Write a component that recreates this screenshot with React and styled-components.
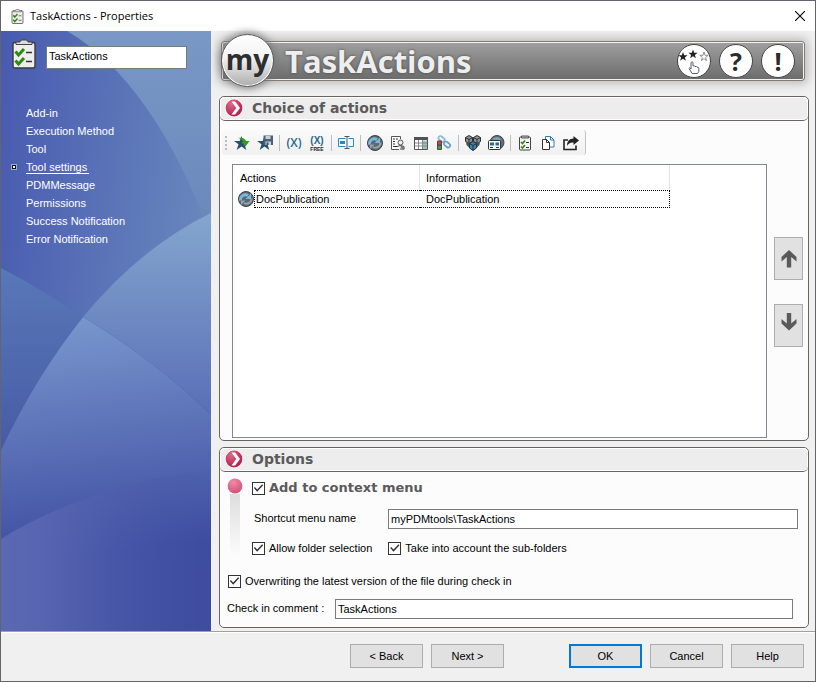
import { useState } from "react";
import styled, { createGlobalStyle } from "styled-components";

const GlobalStyle = createGlobalStyle`
	* {
		box-sizing: border-box;
	}

	body {
		margin: 0;
		font-family: "Liberation Sans", Arial, sans-serif;
		font-size: 11px;
		line-height: 16px;
		color: #000;
	}

	button,
	input {
		font: inherit;
		color: inherit;
	}
`;

const Window = styled.div`
	display: flex;
	flex-direction: column;
	min-height: 100vh;
	border: 1px solid #64646c;
	background-color: #f0f0f0;
`;

const TitleBar = styled.header`
	display: flex;
	align-items: center;
	height: 30px;
	padding: 0 10px 0 9px;
	background-color: #fff;
`;

const Title = styled.h1`
	flex: 1;
	margin: 0 0 0 5px;
	font-family: "Open Sans", "Noto Sans", sans-serif;
	font-size: 11px;
	font-weight: 400;
`;

const CloseButton = styled.button`
	display: flex;
	padding: 0;
	border: none;
	background: none;
`;

const Body = styled.div`
	display: flex;
	flex: 1;
`;

const Sidebar = styled.aside`
	position: relative;
	flex: none;
	width: 210px;
	padding: 8px 24px 0 11px;
	color: #fff;
`;

const Backdrop = styled.svg`
	position: absolute;
	inset: 0;
	width: 100%;
	height: 100%;
`;

const TaskName = styled.div`
	position: relative;
	display: flex;
	align-items: flex-end;
	gap: 10px;
`;

const NameInput = styled.input`
	flex: 1;
	min-width: 0;
	height: 23px;
	padding: 0 2px 4px;
	border: 1px solid #7a7a7a;
	background-color: #fff;
	color: #000;
`;

const Nav = styled.nav`
	position: relative;
	display: flex;
	flex-direction: column;
	margin-top: 35px;
`;

const NavItem = styled.div`
	display: flex;
	align-items: center;
	height: 18px;
`;

const Bullet = styled.span`
	width: 4px;
	height: 4px;
	margin-right: 10px;
	border: 1px solid ${({ $active }) => ($active ? "#111" : "transparent")};
	background-color: ${({ $active }) => ($active ? "#fff" : "transparent")};
	outline: 1px solid ${({ $active }) => ($active ? "#a0acd6" : "transparent")};
`;

const NavLink = styled.a`
	padding-right: ${({ $active }) => ($active ? "2px" : "0")};
	line-height: 12px;
	color: #fff;
	text-decoration: none;
	border-bottom: 1px solid ${({ $active }) => ($active ? "#fff" : "transparent")};
`;

const Main = styled.main`
	display: flex;
	flex: 1;
	flex-direction: column;
	min-width: 0;
	padding: 3px 6px 3px 8px;
`;

const Banner = styled.div`
	display: flex;
	align-items: center;
	height: 54px;
	margin-bottom: 8px;
	padding: 0 4px 0 2px;
`;

const BannerBar = styled.div`
	display: flex;
	flex: 1;
	align-items: center;
	height: 40px;
	padding-right: 9px;
	border: 1px solid #857c70;
	border-radius: 3px;
	background: linear-gradient(#a0a0a0, #6b6b6b);
	box-shadow: inset 0 0 0 1px #f4f2ee, 0 0 10px 3px #bdbdbd;
`;

const Brand = styled.span`
	display: flex;
	align-items: center;
	justify-content: center;
	width: 53px;
	height: 53px;
	margin: 0 0 2px -1px;
	padding-bottom: 2px;
	border: 1px solid #555;
	border-radius: 50%;
	background: linear-gradient(#fff, #f2f2f2 45%, #adadad);
	box-shadow: inset 0 0 0 1px #fff, 0 0 9px 1px #777;
	font-family: "Open Sans", "Noto Sans", sans-serif;
	font-size: 28px;
	font-weight: 700;
	line-height: 32px;
	color: #2e2e2e;
`;

const BannerTitle = styled.h2`
	flex: 1;
	margin: 0 0 0 11px;
	font-family: "Open Sans", "Noto Sans", sans-serif;
	font-size: 31px;
	font-weight: 700;
	line-height: 36px;
	color: #eee;
	text-shadow: 0 0 3px #444;
`;

const RoundButton = styled.button`
	display: flex;
	align-items: center;
	justify-content: center;
	width: 34px;
	height: 34px;
	margin-left: 8px;
	padding: 0;
	border: 1px solid #444;
	border-radius: 50%;
	background-color: #fff;
	font-family: "Open Sans", "Noto Sans", sans-serif;
	font-size: 25px;
	font-weight: 700;
	line-height: 28px;
	color: #2b2b2b;
`;

const Panel = styled.section`
	display: flex;
	flex: ${({ $grow }) => ($grow ? "1" : "none")};
	flex-direction: column;
	margin-bottom: ${({ $grow }) => ($grow ? "6px" : "0")};
	border: 1px solid #6a6460;
	border-radius: 5px;
	background-color: #fcfcfc;
`;

const PanelHeader = styled.header`
	display: flex;
	align-items: center;
	gap: 9px;
	height: 24px;
	padding: 0 5px 2px;
	border-bottom: 1px solid #6a6460;
	border-radius: 5px;
	background-color: #ededed;
	box-shadow: inset 0 0 0 1px #fff;
`;

const PanelTitle = styled.h3`
	margin: 0;
	font-family: "DejaVu Sans", Verdana, sans-serif;
	font-size: 14px;
	font-weight: 700;
	color: #5a5a5a;
`;

const Toolbar = styled.div`
	display: flex;
	align-items: center;
	align-self: flex-start;
	gap: 7px;
	height: 25px;
	margin: 9px 0 0 2px;
	padding: 0 6px 0 3px;
	border-right: 1px solid #c4c4c4;
	border-radius: 3px;
	background: linear-gradient(#fafafa, #f0f0f0);
`;

const Grip = styled.span`
	width: 2px;
	height: 14px;
	background: repeating-linear-gradient(#bbb 0 2px, transparent 2px 4px);
`;

const Separator = styled.span`
	width: 1px;
	height: 16px;
	margin: 0 -1px;
	background-color: #bdbdbd;
`;

const ToolButton = styled.button`
	display: flex;
	padding: 0;
	border: none;
	background: none;
`;

const PanelBody = styled.div`
	display: flex;
	flex: 1;
	gap: 7px;
	margin: 9px 5px 2px 12px;
`;

const ListBox = styled.div`
	flex: 1;
	border: 1px solid #828790;
	background-color: #fff;
`;

const ActionsTable = styled.table`
	border-collapse: separate;
	border-spacing: 0;
	table-layout: fixed;
	width: 437px;
`;

const HeadCell = styled.th`
	height: 25px;
	padding: 0 0 0 ${({ $first }) => ($first ? "7px" : "6px")};
	border-right: 1px solid #e5e5e5;
	font-weight: 400;
	text-align: left;
`;

const IconCell = styled.td`
	width: 21px;
	height: 18px;
	padding: 0 0 0 5px;

	svg {
		display: block;
	}
`;

const Cell = styled.td`
	height: 18px;
	padding: 0 0 0 ${({ $first }) => ($first ? "1px" : "6px")};
	border: 1px dotted #000;
	border-left-width: ${({ $first }) => ($first ? "1px" : "0")};
	border-right-width: ${({ $first }) => ($first ? "0" : "1px")};
	line-height: 14px;
`;

const MoveButtons = styled.div`
	display: flex;
	flex-direction: column;
	gap: 24px;
	padding-top: 73px;
`;

const MoveButton = styled.button`
	display: flex;
	align-items: flex-start;
	justify-content: center;
	width: 29px;
	height: 43px;
	padding: ${({ $down }) => ($down ? "8px" : "12px")} 0 0;
	border: 1px solid #adadad;
	background-color: #e1e1e1;
`;

const Options = styled.div`
	padding: 6px 10px 8px 7px;
`;

const ContextGroup = styled.div`
	display: flex;
	gap: 9px;
`;

const Marker = styled.div`
	display: flex;
	flex: none;
	flex-direction: column;
	align-items: center;
	width: 16px;
`;

const MarkerTail = styled.span`
	width: 10px;
	flex: 1;
	background: linear-gradient(#ddd, #fcfcfc);
`;

const ContextFields = styled.div`
	flex: 1;
	padding-top: 2px;
`;

const Row = styled.div`
	display: flex;
	align-items: center;
	gap: ${({ $gap }) => $gap || 0}px;
	margin-top: ${({ $top }) => $top || 0}px;
	padding-left: ${({ $left }) => $left || 0}px;
	padding-right: ${({ $right }) => $right || 0}px;
`;

const CheckLabel = styled.label`
	display: flex;
	align-items: center;
	gap: 4px;
	height: 16px;
	font-size: ${({ $big }) => ($big ? "13px" : "11px")};
	font-family: ${({ $big }) => ($big ? '"DejaVu Sans", Verdana, sans-serif' : "inherit")};
	font-weight: ${({ $big }) => ($big ? "700" : "400")};
	color: ${({ $big }) => ($big ? "#5a5a5a" : "#000")};
`;

const CheckBox = styled.input`
	appearance: none;
	display: flex;
	flex: none;
	width: 13px;
	height: 13px;
	margin: 0;
	border: 1px solid #333;
	background-color: #fff;

	&:checked::after {
		content: "";
		flex: 1;
		background-color: #333;
		clip-path: polygon(8% 50%, 17% 41%, 38% 64%, 83% 16%, 92% 26%, 38% 83%);
	}
`;

const FieldLabel = styled.label`
	flex: none;
	width: ${({ $width }) => $width}px;
	padding-left: ${({ $indent }) => $indent || 0}px;
	padding-bottom: 3px;
`;

const TextInput = styled.input`
	flex: 1;
	min-width: 0;
	height: 20px;
	padding: 0 2px;
	border: 1px solid #7a7a7a;
	background-color: #fff;
`;

const Footer = styled.footer`
	display: flex;
	justify-content: flex-end;
	gap: 8px;
	height: 50px;
	padding: 12px 11px 0;
	border-top: 1px solid #a0a0a0;
	box-shadow: inset 0 1px 0 #fff;
`;

const PushButton = styled.button`
	width: 73px;
	height: 24px;
	margin-left: ${({ $spaced }) => ($spaced ? "57px" : "0")};
	padding: 0;
	border: ${({ $default }) => ($default ? "2px solid #0078d7" : "1px solid #adadad")};
	background-color: #e1e1e1;
`;

const ClipboardIcon = ({ width, height }) => (
	<svg width={width} height={height} viewBox="0 0 24 30">
		<rect x="1" y="3.500" width="22" height="25.500" rx="2" fill="#eee" stroke="#3a3a3a" strokeWidth="1.400" />
		<path d="M4 5.500V3h4q0-2 2-2h4q2 0 2 2h4v2.500z" fill="#dcdcdc" stroke="#444" />
		<path d="M3.500 12.500l3 3.500 5.500-6M3.500 21.500l3 3.500 5.500-6" fill="none" stroke="#2f8a12" strokeWidth="3" />
		<path d="M14 13.500h6M14 22.500h6" stroke="#333" strokeWidth="1.300" />
	</svg>
);

const ChevronBadge = () => (
	<svg width="18" height="18" viewBox="0 0 18 18">
		<defs>
			<radialGradient id="badge" cx="35%" cy="25%" r="75%">
				<stop offset="0" stopColor="#de6a8a" />
				<stop offset="1" stopColor="#b01f4f" />
			</radialGradient>
		</defs>
		<circle cx="9" cy="9" r="9" fill="#fff" />
		<circle cx="9" cy="9" r="8.400" fill="url(#badge)" />
		<path d="M6.500 2.500h3.600L15 9l-4.900 6.500H6.500L11.300 9z" fill="#fff" />
	</svg>
);

const PinkDot = () => (
	<svg width="16" height="16" viewBox="0 0 16 16">
		<defs>
			<radialGradient id="dot" cx="40%" cy="25%" r="80%">
				<stop offset="0" stopColor="#f08aa6" />
				<stop offset="1" stopColor="#d04f76" />
			</radialGradient>
		</defs>
		<circle cx="8" cy="8" r="7.400" fill="url(#dot)" />
	</svg>
);

const RatingIcon = () => (
	<svg width="32" height="32" viewBox="0 0 32 32">
		<path d="M5 7l1.200 3.300h3.400L6.900 12.400l1 3.400L5 13.800l-2.900 2 1-3.400L.4 10.300h3.400z" fill="#222" />
		<path d="M15 4.500l1.200 3.300h3.400l-2.700 2.100 1 3.400-2.900-2-2.900 2 1-3.400-2.700-2.100h3.400z" fill="#222" />
		<path d="M26 7l1 3.300h3.200l-2.600 2.100 1 3.200-2.600-1.900-2.600 1.900 1-3.200-2.600-2.100H25z" fill="none" stroke="#777" strokeWidth=".8" />
		<path
			d="M13 24v-6.500q1-1.500 2 0V21q1.500-1 2 .6 1.500-.8 2 .6 1.800-.5 1.800 1.300v3l-1.300 2h-5.300L11 23.500q.3-1.400 2 .5z"
			fill="#fff"
			stroke="#52606a"
		/>
	</svg>
);

const CloseIcon = () => (
	<svg width="10" height="10" viewBox="0 0 10 10">
		<path d="M0 0l10 10M10 0L0 10" stroke="#000" strokeWidth="1.100" />
	</svg>
);

const ArrowIcon = ({ down }) => (
	<svg width="16" height="18" viewBox="0 0 16 18">
		<path
			d={down ? "M8 17.500l7.500-7V6L10.200 10.500V0H5.800v10.500L.5 6v4.500z" : "M8 0l7.500 7v4.500L10.200 7v10.500H5.800V7L.5 11.500V7z"}
			fill="#5a5a5a"
		/>
	</svg>
);

const RefreshIcon = () => (
	<svg width="16" height="16" viewBox="0 0 16 16">
		<circle cx="8" cy="8" r="7.500" fill="#62666a" stroke="#3f4347" />
		<path d="M2.500 9.500A5 5 0 0 1 10 4.500" fill="none" stroke="#74bbe2" strokeWidth="2.800" />
		<path d="M13 2.500v5.500H7.500z" fill="#74bbe2" />
		<path d="M13.500 7.500A5 5 0 0 1 6 12" fill="none" stroke="#8aa6b6" strokeWidth="2" />
		<path d="M3 14V9.500h4.500z" fill="#8aa6b6" />
	</svg>
);

const star = "M7.500 1l1.800 5H15l-4.500 3.300 1.800 5.700-4.800-3.500L2.700 15l1.800-5.700L0 6h5.700z";

const toolIcons = {
	"Add favorite": (
		<>
			<path d={star} fill="#28506a" />
			<path d="M4.500 3Q10 2 12 6h3.500L11.500 11.500 7.500 7H9Q8 4 4.500 3z" fill="#329b1c" />
		</>
	),
	"Save favorite": (
		<>
			<path d={star} fill="#28506a" />
			<path d="M6.500.5h9.500v9.500H6.500z" fill="#4b6070" />
			<path d="M8.500 1h5v3h-5zM8.500 6.500h5.500V10H8.500z" fill="#c4d2dc" />
			<path d="M9.500 7.500h2V10h-2z" fill="#3d5262" />
		</>
	),
	Variable: (
		<text x="8" y="12" textAnchor="middle" fontFamily="Open Sans" fontWeight="600" fontSize="12" fill="#29678d">
			(X)
		</text>
	),
	"Free variable": (
		<>
			<text x="8" y="9" textAnchor="middle" fontFamily="Liberation Sans" fontWeight="700" fontSize="10" fill="#29678d">
				(X)
			</text>
			<text x="8" y="16" textAnchor="middle" fontFamily="Liberation Sans" fontWeight="700" fontSize="5" fill="#222">
				FREE
			</text>
		</>
	),
	Rename: (
		<>
			<path d="M7.500 3.500H.5v8h7M10.500 3.500h5v8h-5" fill="#eef8fd" stroke="#2c88bd" />
			<path d="M2 6h5v3H2z" fill="#2888c4" />
			<path d="M6.500 1.500h5M9 1.500v12M6.500 13.500h5" fill="none" stroke="#555" />
		</>
	),
	"Script document": (
		<>
			<path d="M9 14.500H1.500v-13h9V4" fill="#fff" stroke="#555" />
			<path d="M3 4h2M6 4h2M3 6.500h2M3 9h2M3 11.500h4" stroke="#333" />
			<circle cx="10.500" cy="7.500" r="2.500" fill="#eee" stroke="#555" />
			<path d="M7 11.500q3.500-2 7 0v2.500h-4" fill="none" stroke="#444" />
			<path d="M11 11l3 3.500" stroke="#777" strokeWidth="2" />
		</>
	),
	"Data table": (
		<>
			<path d="M1.500 2.500h13v12h-13z" fill="#fff" stroke="#555" />
			<path d="M9.500 5.500h4.500V14H9.500z" fill="#8fc5bd" />
			<path d="M1 2h14v3H1z" fill="#4f5357" />
			<path d="M2 8h12M2 11h12M5.500 5v9M9.500 5v9" stroke="#888" />
		</>
	),
	"Link state": (
		<>
			<rect x="2" y="2" width="7" height="4" rx="2" transform="rotate(40 5.500 4)" fill="none" stroke="#8cb9d8" strokeWidth="1.800" />
			<rect x="7.500" y="7.500" width="7" height="4" rx="2" transform="rotate(40 11 9.500)" fill="none" stroke="#6f9fc4" strokeWidth="1.800" />
			<rect x="1" y="5.500" width="5" height="9.500" rx="1" fill="#4c4c4c" />
			<circle cx="3.500" cy="8" r="1.700" fill="#e23b2e" />
			<circle cx="3.500" cy="12.500" r="1.700" fill="#3cae35" />
		</>
	),
	Components: (
		<>
			<path d="M4 .5l3.500 2v4L4 8.500.5 6.500v-4zM12 .5l3.500 2v4l-3.500 2-3.500-2v-4z" fill="#8d9396" stroke="#2c3033" />
			<path d="M4 4.500v4M.5 2.500l3.500 2 3.500-2M12 4.500v4M8.500 2.500l3.500 2 3.500-2" fill="none" stroke="#2c3033" />
			<path d="M1 7l3 1.500v4L1.500 10zM15 7l-3 1.500v4l2.500-2.500z" fill="#4c5256" />
			<path d="M8 6.500l3.500 2v4.500L8 15.500l-3.500-2.500V8.500z" fill="#3c86ab" stroke="#20323e" />
			<path d="M8 10.500v5M4.500 8.500l3.500 2 3.500-2" fill="none" stroke="#20323e" />
		</>
	),
	"Web card": (
		<>
			<circle cx="9" cy="7.500" r="7" fill="#666c70" stroke="#3f464b" />
			<path d="M4 4.500Q7 1.500 11 2.500l2 2.500z" fill="#6fb0d2" />
			<rect x=".5" y="5.500" width="12" height="9" rx="1" fill="#f6f6f6" stroke="#333" />
			<path d="M2 7.500h4v3H2zM7.500 7.500h3.500v3H7.500z" fill="#286c94" />
			<path d="M2 12.500h3M8 12.500h3" stroke="#333" />
		</>
	),
	"Task list": (
		<>
			<rect x="2.500" y="2" width="11" height="13" rx="1" fill="#f4f4f4" stroke="#444" />
			<path d="M4.500 3V1h7v2z" fill="#bbb" stroke="#555" />
			<path d="M4 7l1.500 1.500L8 5.500M4 11.500L5.500 13 8 10" fill="none" stroke="#2f8a12" strokeWidth="1.700" />
			<path d="M9 7.500h3M9 12.500h3" stroke="#333" />
		</>
	),
	"Copy files": (
		<>
			<path d="M5.500 4V1.500h5L14 5v7H9.500" fill="#fff" stroke="#317fa8" />
			<path d="M10.500 1.500V5H14" fill="none" stroke="#317fa8" />
			<path d="M2.500 4.500h4L9.500 7.500v7h-7z" fill="#fff" stroke="#333" />
			<path d="M6.500 4.500v3h3" fill="none" stroke="#333" />
		</>
	),
	Export: (
		<>
			<path d="M5 5H1v9.500h12v-4" fill="none" stroke="#222" strokeWidth="1.600" />
			<path d="M4 11Q4 3.500 10.500 3.500V1L16 5.500 10.500 10V7.500Q6 7 4 11z" fill="#222" />
		</>
	),
};

const toolGroups = [
	["Add favorite", "Save favorite"],
	["Variable", "Free variable"],
	["Rename"],
	["Refresh", "Script document", "Data table", "Link state"],
	["Components", "Web card"],
	["Task list", "Copy files", "Export"],
];

const pages = [
	"Add-in",
	"Execution Method",
	"Tool",
	"Tool settings",
	"PDMMessage",
	"Permissions",
	"Success Notification",
	"Error Notification",
];

const actions = [{ name: "DocPublication", information: "DocPublication" }];

const gradients = [
	{ id: "base", x2: 1, y2: 0.3, from: "#485ab0", to: "#6988bd" },
	{ id: "corner", x2: 0, y2: 1, from: "#7998c5", to: "#6a87bb" },
	{ id: "wedge", x2: 0, y2: 1, from: "#5878b8", to: "#475ba5" },
	{ id: "upper", x2: 0, y2: 1, from: "#84a6ce", to: "#566ab5" },
	{ id: "lower", x2: 0.1, y2: 1, from: "#7b99cf", to: "#3e4da1" },
	{ id: "floor", x2: 1, y2: 0, from: "#5b69b4", to: "#4655a6" },
];

const SidebarBackdrop = () => (
	<Backdrop viewBox="0 0 210 600" preserveAspectRatio="none" aria-hidden="true">
		<defs>
			{gradients.map(({ id, x2, y2, from, to }) => (
				<linearGradient key={id} id={id} x2={x2} y2={y2}>
					<stop offset="0" stopColor={from} />
					<stop offset="1" stopColor={to} />
				</linearGradient>
			))}
			<linearGradient id="fade" x1="0.2" x2="1">
				<stop offset="0" stopColor="#fff" />
				<stop offset="1" stopColor="#000" />
			</linearGradient>
			<mask id="floorMask" maskUnits="userSpaceOnUse" x="0" y="400" width="210" height="200">
				<rect y="400" width="210" height="200" fill="url(#fade)" />
			</mask>
		</defs>
		<rect width="210" height="600" fill="url(#base)" />
		<path d="M66 0Q152 50 210 205V0z" fill="url(#corner)" />
		<path d="M0 237Q44 260 83 287L60 420H0z" fill="url(#wedge)" />
		<path d="M210 182Q140 216 82 286L150 400H210z" fill="url(#upper)" />
		<path d="M82 286Q35 345 0 419V600H210V384Q155 330 82 286z" fill="#3f4da0" />
		<path d="M82 286Q35 345 0 419V530H210V384Q155 330 82 286z" fill="url(#lower)" />
		<path d="M0 508Q60 470 150 448L210 440V600H0z" fill="url(#floor)" mask="url(#floorMask)" />
	</Backdrop>
);

const App = () => {
	const [page, setPage] = useState("Tool settings");

	const handlePageClick = (e, name) => {
		e.preventDefault();
		setPage(name);
	};

	return (
		<Window>
			<GlobalStyle />
			<TitleBar>
				<ClipboardIcon width={15} height={15} />
				<Title>TaskActions - Properties</Title>
				<CloseButton aria-label="Close">
					<CloseIcon />
				</CloseButton>
			</TitleBar>
			<Body>
				<Sidebar>
					<SidebarBackdrop />
					<TaskName>
						<ClipboardIcon width={24} height={30} />
						<NameInput aria-label="Task name" defaultValue="TaskActions" />
					</TaskName>
					<Nav>
						{pages.map((name) => (
							<NavItem key={name}>
								<Bullet $active={name === page} />
								<NavLink href="#" $active={name === page} onClick={(e) => handlePageClick(e, name)}>
									{name}
								</NavLink>
							</NavItem>
						))}
					</Nav>
				</Sidebar>
				<Main>
					<Banner>
						<BannerBar>
							<Brand>my</Brand>
							<BannerTitle>TaskActions</BannerTitle>
							<RoundButton aria-label="Favorites">
								<RatingIcon />
							</RoundButton>
							<RoundButton>?</RoundButton>
							<RoundButton>!</RoundButton>
						</BannerBar>
					</Banner>
					<Panel $grow>
						<PanelHeader>
							<ChevronBadge />
							<PanelTitle>Choice of actions</PanelTitle>
						</PanelHeader>
						<Toolbar>
							<Grip />
							{toolGroups.map((group, i) => [
								i > 0 && <Separator key={`separator-${i}`} />,
								...group.map((name) => (
									<ToolButton key={name} aria-label={name}>
										{name === "Refresh" ? (
											<RefreshIcon />
										) : (
											<svg width="16" height="16" viewBox="0 0 16 16" overflow="visible">
												{toolIcons[name]}
											</svg>
										)}
									</ToolButton>
								)),
							])}
						</Toolbar>
						<PanelBody>
							<ListBox>
								<ActionsTable>
									<colgroup>
										<col width="21" />
										<col width="166" />
										<col width="250" />
									</colgroup>
									<thead>
										<tr>
											<HeadCell colSpan="2" $first>
												Actions
											</HeadCell>
											<HeadCell>Information</HeadCell>
										</tr>
									</thead>
									<tbody>
										{actions.map(({ name, information }) => (
											<tr key={name}>
												<IconCell>
													<RefreshIcon />
												</IconCell>
												<Cell $first>{name}</Cell>
												<Cell>{information}</Cell>
											</tr>
										))}
									</tbody>
								</ActionsTable>
							</ListBox>
							<MoveButtons>
								<MoveButton aria-label="Move up">
									<ArrowIcon />
								</MoveButton>
								<MoveButton aria-label="Move down" $down>
									<ArrowIcon down />
								</MoveButton>
							</MoveButtons>
						</PanelBody>
					</Panel>
					<Panel>
						<PanelHeader>
							<ChevronBadge />
							<PanelTitle>Options</PanelTitle>
						</PanelHeader>
						<Options>
							<ContextGroup>
								<Marker>
									<PinkDot />
									<MarkerTail />
								</Marker>
								<ContextFields>
									<CheckLabel $big>
										<CheckBox type="checkbox" defaultChecked />
										Add to context menu
									</CheckLabel>
									<Row $top={13}>
										<FieldLabel htmlFor="menu-name" $width={136} $indent={2}>
											Shortcut menu name
										</FieldLabel>
										<TextInput id="menu-name" defaultValue="myPDMtools\TaskActions" />
									</Row>
									<Row $top={11} $gap={16}>
										<CheckLabel>
											<CheckBox type="checkbox" defaultChecked />
											Allow folder selection
										</CheckLabel>
										<CheckLabel>
											<CheckBox type="checkbox" defaultChecked />
											Take into account the sub-folders
										</CheckLabel>
									</Row>
								</ContextFields>
							</ContextGroup>
							<Row $top={17} $left={1}>
								<CheckLabel>
									<CheckBox type="checkbox" defaultChecked />
									Overwriting the latest version of the file during check in
								</CheckLabel>
							</Row>
							<Row $top={10} $right={5}>
								<FieldLabel htmlFor="comment" $width={108}>
									Check in comment :
								</FieldLabel>
								<TextInput id="comment" defaultValue="TaskActions" />
							</Row>
						</Options>
					</Panel>
				</Main>
			</Body>
			<Footer>
				<PushButton>&lt; Back</PushButton>
				<PushButton>Next &gt;</PushButton>
				<PushButton $default $spaced>
					OK
				</PushButton>
				<PushButton>Cancel</PushButton>
				<PushButton>Help</PushButton>
			</Footer>
		</Window>
	);
};

export default App;
